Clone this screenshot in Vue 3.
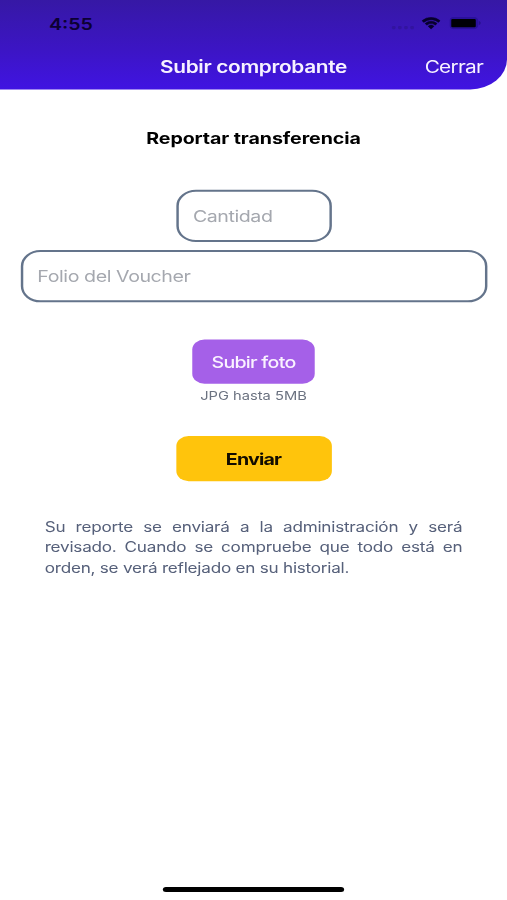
<script setup>
import { ref } from 'vue'

const amount = ref('')
const folio = ref('')
</script>

<template>
  <div class="viewport">
    <main class="screen">
      <header class="header">
        <div class="status">
          <span class="time">4:55</span>
          <div class="indicators">
            <span class="signal"><i></i><i></i><i></i><i></i></span>
            <svg class="wifi" width="16" height="13" viewBox="0 0 16 12" preserveAspectRatio="none" fill="#07002b" stroke="#07002b" stroke-width="0.5">
              <path d="M8 2.4c2.2 0 4.2.9 5.7 2.3.1.1.3.1.4 0l1.1-1.1c.1-.1.1-.3 0-.4a10.4 10.4 0 0 0-14.4 0c-.1.1-.1.3 0 .4l1.1 1.1c.1.1.3.1.4 0A8.2 8.2 0 0 1 8 2.4z" />
              <path d="M8 6c1.2 0 2.3.5 3.2 1.2.1.1.3.1.4 0l1.1-1.1c.1-.1.1-.3 0-.4a6.9 6.9 0 0 0-9.4 0c-.1.1-.1.3 0 .4l1.1 1.1c.1.1.3.1.4 0A4.7 4.7 0 0 1 8 6z" />
              <path d="M10.2 8.7c.1-.1.1-.3 0-.4a3.4 3.4 0 0 0-4.4 0c-.1.1-.1.3 0 .4l2 2c.1.1.3.1.4 0z" />
            </svg>
            <svg class="battery" width="26" height="12" viewBox="0 0 26 12">
              <rect x="0.5" y="0.5" width="22.5" height="11" rx="3" fill="#2a119b" stroke="#2a119b" />
              <rect x="1.5" y="1.8" width="20" height="8.4" rx="1" fill="#000006" />
              <path d="M24 4v4c.9-.3 1.5-1.1 1.5-2S24.9 4.3 24 4z" fill="#28108e" />
            </svg>
          </div>
        </div>
        <nav class="nav">
          <span class="title">Subir comprobante</span>
          <a class="close">Cerrar</a>
        </nav>
      </header>

      <form class="form" @submit.prevent>
        <h1>Reportar transferencia</h1>
        <input v-model="amount" class="field amount" placeholder="Cantidad" />
        <input v-model="folio" class="field folio" placeholder="Folio del Voucher" />
        <button type="button" class="upload">Subir foto</button>
        <span class="hint">JPG hasta 5MB</span>
        <button type="submit" class="send">Enviar</button>
        <p>Su reporte se enviará a la administración y será revisado. Cuando se compruebe que todo está en orden, se verá reflejado en su historial.</p>
      </form>
      <div class="home"></div>
    </main>
  </div>
</template>

<style>
body {
  margin: 0;
  background: #fff;
}
</style>

<style scoped>
.viewport {
  width: 507px;
  height: 900px;
  overflow: hidden;
  background: #fff;
}
/* A 414x896 phone canvas stretched over the viewport */
.screen {
  width: 414px;
  height: 896px;
  display: flex;
  flex-direction: column;
  transform: scale(1.22464, 1.00446);
  transform-origin: 0 0;
  font-family: Inter, "Liberation Sans", sans-serif;
  color: #000;
}
.header {
  height: 88.5px;
  flex: none;
  background: linear-gradient(#3618a5, #3c15c4 55%, #4014e2);
  border-radius: 0 0 30px 0;
}
.status {
  height: 44px;
  display: flex;
  justify-content: space-between;
  padding: 0 21px 0 40px;
}
.time {
  font-size: 16px;
  font-weight: 600;
  line-height: 20px;
  margin-top: 14px;
  color: #0c0033;
}
.indicators {
  height: 12px;
  margin-top: 17.4px;
  display: flex;
  align-items: center;
}
.signal {
  display: flex;
  gap: 2px;
  margin: 8px 6px 0 0;
}
.signal i {
  width: 3px;
  height: 3px;
  border-radius: 1px;
  background: #32149f;
}
.battery {
  margin-left: 7px;
}
.nav {
  height: 46px;
  display: grid;
  grid-template-columns: 1fr auto 1fr;
  align-items: center;
  padding: 0 19.5px;
  color: #f7f2ff;
  font-size: 17px;
}
.title {
  grid-column: 2;
  font-weight: 600;
  letter-spacing: -0.27px;
}
.close {
  justify-self: end;
  letter-spacing: -0.6px;
}
.form {
  flex: 1;
  display: flex;
  flex-direction: column;
  align-items: center;
  padding: 0 16px;
}
h1 {
  margin: 38.5px 0 42px;
  font-size: 16px;
  line-height: 20px;
  font-weight: 700;
  letter-spacing: -0.07px;
}
.field {
  box-sizing: border-box;
  height: 52px;
  margin: 0 0 8px;
  padding: 0 12px;
  border: 2px solid #64748b;
  border-radius: 16px;
  background: #fff;
  outline: none;
  font: 16px Inter, "Liberation Sans", sans-serif;
  letter-spacing: -0.35px;
}
.field::placeholder {
  color: #a5a8af;
  opacity: 1;
}
.amount {
  width: 127px;
}
.folio {
  width: 381px;
}
button {
  border: 0;
  padding: 0;
  height: 44.5px;
  border-radius: 10px;
  font: 600 16px Inter, "Liberation Sans", sans-serif;
}
.upload {
  width: 100px;
  margin-top: 28.7px;
  background: #a560e8;
  color: #faf2ff;
  font-weight: 500;
  letter-spacing: -0.6px;
}
.hint {
  margin-top: 3.5px;
  font-size: 12px;
  line-height: 16px;
  color: #6b7280;
}
.send {
  width: 127px;
  margin-top: 32.5px;
  padding-top: 1px;
  background: #ffc40c;
  color: #120c00;
  font-weight: 700;
  letter-spacing: -0.65px;
}
p {
  width: 341px;
  margin: 36px 0 0;
  font-size: 14px;
  line-height: 20px;
  letter-spacing: -0.2px;
  text-align: justify;
  color: #56607a;
}
.home {
  width: 148px;
  height: 5px;
  margin: 0 auto 8px;
  border-radius: 3px;
  background: #000;
}
</style>
